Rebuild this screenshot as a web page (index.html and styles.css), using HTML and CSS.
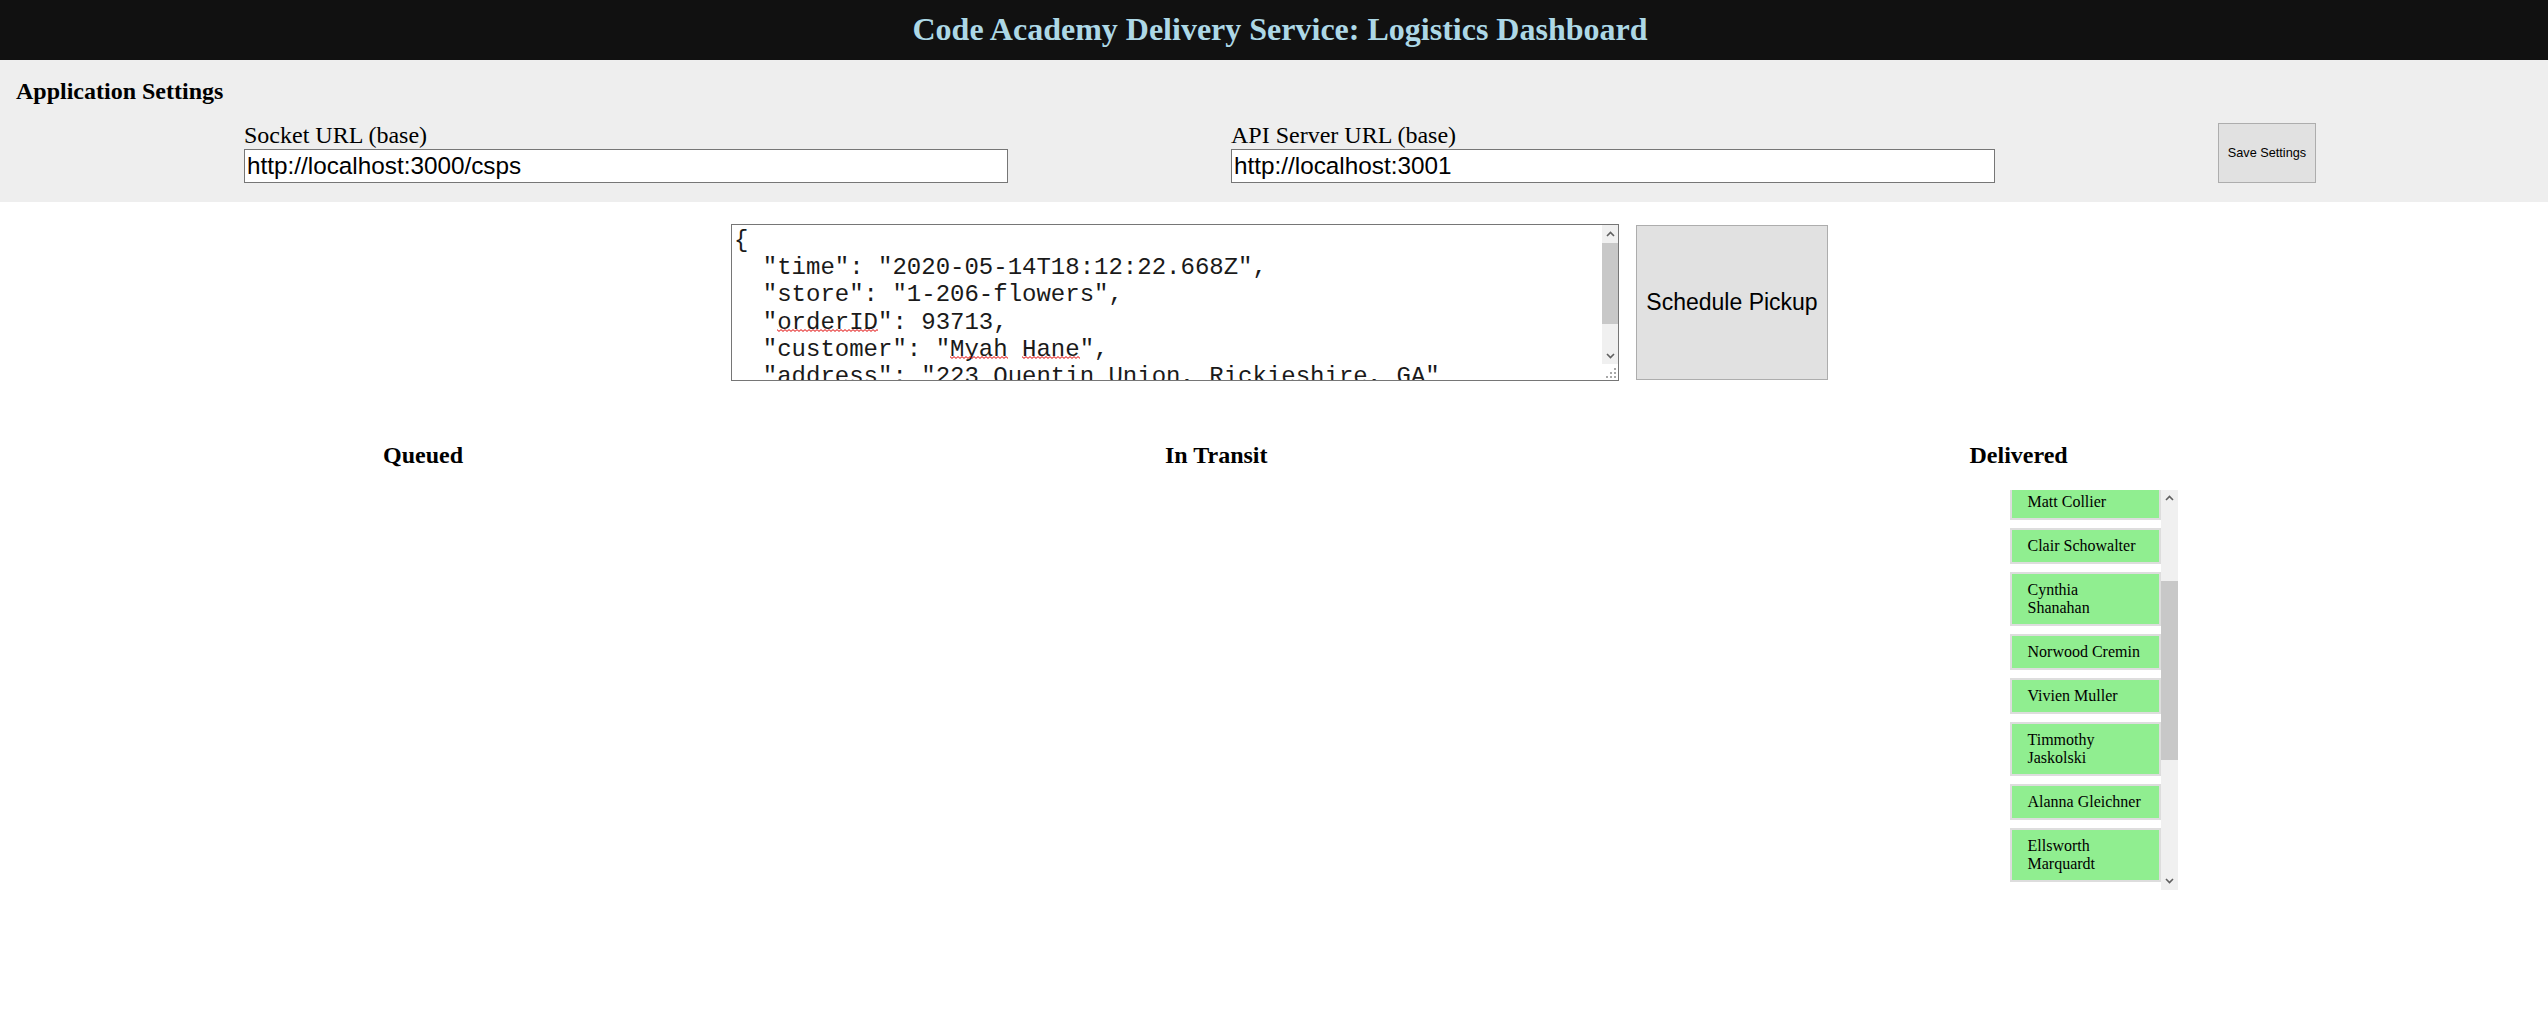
FILE: index.html
```html
<!DOCTYPE html>
<html lang="en">
<head>
<meta charset="utf-8">
<title>Code Academy Delivery Service: Logistics Dashboard</title>
<link rel="stylesheet" href="styles.css">
</head>
<body>
<svg class="defs" width="0" height="0" aria-hidden="true">
  <defs>
    <pattern id="wave" width="4" height="3" patternUnits="userSpaceOnUse">
      <path d="M0 0.6 L2 2.4 L4 0.6" fill="none" stroke="#e00000" stroke-width="1"/>
    </pattern>
  </defs>
</svg>
<header class="app-header">
  <h1 class="app-title">Code Academy Delivery Service: Logistics Dashboard</h1>
</header>
<section class="settings">
  <h2 class="settings-title">Application Settings</h2>
  <form class="settings-row">
    <label class="field">
      <span class="field-label">Socket URL (base)</span>
      <input class="field-input" type="text" value="http://localhost:3000/csps">
    </label>
    <label class="field">
      <span class="field-label">API Server URL (base)</span>
      <input class="field-input" type="text" value="http://localhost:3001">
    </label>
    <button class="btn btn-save" type="button">Save Settings</button>
  </form>
</section>
<section class="pickup">
  <div class="json-box">
    <textarea class="pickup-json" spellcheck="true">{
  "time": "2020-05-14T18:12:22.668Z",
  "store": "1-206-flowers",
  "orderID": 93713,
  "customer": "Myah Hane",
  "address": "223 Quentin Union, Rickieshire, GA"
}</textarea>
    <span class="squiggle squiggle--order"><svg width="101" height="3"><rect width="101" height="3" fill="url(#wave)"/></svg></span>
    <span class="squiggle squiggle--myah"><svg width="58" height="3"><rect width="58" height="3" fill="url(#wave)"/></svg></span>
    <span class="squiggle squiggle--hane"><svg width="58" height="3"><rect width="58" height="3" fill="url(#wave)"/></svg></span>
    <div class="vbar vbar--json">
      <div class="vbar-btn"><svg width="9" height="6" viewBox="0 0 9 6"><path d="M1 5 L4.5 1.5 L8 5" fill="none" stroke="#606060" stroke-width="1.6"/></svg></div>
      <div class="vbar-track"><div class="vbar-thumb vbar-thumb--json"></div></div>
      <div class="vbar-btn"><svg width="9" height="6" viewBox="0 0 9 6"><path d="M1 1 L4.5 4.5 L8 1" fill="none" stroke="#606060" stroke-width="1.6"/></svg></div>
      <div class="vbar-corner"><svg width="16" height="16" viewBox="0 0 16 16"><g fill="#a8a8a8"><rect x="12" y="12" width="2" height="2"/><rect x="8" y="12" width="2" height="2"/><rect x="4" y="12" width="2" height="2"/><rect x="12" y="8" width="2" height="2"/><rect x="8" y="8" width="2" height="2"/><rect x="12" y="4" width="2" height="2"/></g></svg></div>
    </div>
  </div>
  <button class="btn btn-schedule" type="button">Schedule Pickup</button>
</section>
<section class="columns">
  <div class="column">
    <h2 class="column-title">Queued</h2>
    <ul class="order-list"></ul>
  </div>
  <div class="column">
    <h2 class="column-title">In Transit</h2>
    <ul class="order-list"></ul>
  </div>
  <div class="column">
    <h2 class="column-title">Delivered</h2>
    <div class="delivered-box">
      <ul class="order-list order-list--delivered">
        <li class="order">Lorenzo Kunze</li>
        <li class="order">Dayna Hills</li>
        <li class="order">Maximillian Wintheiser</li>
        <li class="order">Matt Collier</li>
        <li class="order">Clair Schowalter</li>
        <li class="order">Cynthia Shanahan</li>
        <li class="order">Norwood Cremin</li>
        <li class="order">Vivien Muller</li>
        <li class="order">Timmothy Jaskolski</li>
        <li class="order">Alanna Gleichner</li>
        <li class="order">Ellsworth Marquardt</li>
        <li class="order">Elroy Kihn</li>
        <li class="order">Jeramy Runolfsdottir</li>
        <li class="order">Brenda Weimann</li>
        <li class="order">Concepcion Schowalter</li>
        <li class="order">Aylin Kuhic</li>
      </ul>
      <div class="vbar vbar--list">
        <div class="vbar-btn"><svg width="9" height="6" viewBox="0 0 9 6"><path d="M1 5 L4.5 1.5 L8 5" fill="none" stroke="#606060" stroke-width="1.6"/></svg></div>
        <div class="vbar-track"><div class="vbar-thumb vbar-thumb--list"></div></div>
        <div class="vbar-btn"><svg width="9" height="6" viewBox="0 0 9 6"><path d="M1 1 L4.5 4.5 L8 1" fill="none" stroke="#606060" stroke-width="1.6"/></svg></div>
      </div>
    </div>
  </div>
</section>
<script src="script.js"></script>
</body>
</html>
```
FILE: styles.css
```css
html, body {
  margin: 0;
  padding: 0;
  background: #fff;
  font-family: "Liberation Serif", "Times New Roman", serif;
  color: #000;
}

.defs {
  position: absolute;
  width: 0;
  height: 0;
}

.app-header {
  box-sizing: border-box;
  height: 60px;
  padding: 11px 0 0 12px;
  background: #111;
}

.app-title {
  margin: 0;
  font-size: 32px;
  line-height: 37px;
  font-weight: bold;
  text-align: center;
  color: #add8e6;
}

.settings {
  background: #eee;
  padding: 18px 16px 19px 16px;
}

.settings-title {
  margin: 0 0 17px 0;
  font-size: 24px;
  font-weight: bold;
}

.settings-row {
  display: flex;
  align-items: center;
  gap: 223px;
  padding-left: 228px;
  margin: 0;
}

.field {
  display: flex;
  flex-direction: column;
  width: 764px;
}

.field-label {
  font-size: 24px;
}

.field-input {
  box-sizing: border-box;
  width: 764px;
  height: 34px;
  margin: 0;
  padding: 1px 2px;
  border: 1px solid #767676;
  background: #fff;
  font-family: "Liberation Sans", Arial, sans-serif;
  font-size: 24.3px;
  color: #000;
}

.btn {
  box-sizing: border-box;
  margin: 0;
  padding: 0;
  background: #e1e1e1;
  border: 1px solid #adadad;
  font-family: "Liberation Sans", Arial, sans-serif;
  color: #000;
}

.btn-save {
  width: 98px;
  height: 60px;
  font-size: 12.7px;
}

.pickup {
  display: flex;
  justify-content: center;
  align-items: center;
  gap: 17px;
  padding-left: 11px;
  margin-top: 22px;
}

.json-box {
  position: relative;
  box-sizing: border-box;
  display: flex;
  width: 888px;
  height: 157px;
  border: 1px solid #767676;
  background: #fff;
}

.pickup-json {
  box-sizing: border-box;
  flex: 1;
  min-width: 0;
  height: 100%;
  margin: 0;
  padding: 2px;
  border: 0;
  outline: none;
  font-family: "Liberation Mono", "Courier New", monospace;
  font-size: 24px;
  line-height: 27.2px;
  color: #1a1a1a;
  background: #fff;
  resize: none;
  overflow: hidden;
  white-space: pre;
}

.squiggle {
  position: absolute;
  height: 3px;
  line-height: 0;
  pointer-events: none;
}

.squiggle svg {
  display: block;
}

.squiggle--order {
  left: 45px;
  top: 104px;
}

.squiggle--myah {
  left: 218px;
  top: 131px;
}

.squiggle--hane {
  left: 290px;
  top: 131px;
}

.vbar {
  display: flex;
  flex-direction: column;
  flex: none;
  width: 17px;
  background: #f0f0f0;
}

.vbar--json {
  width: 16px;
}

.vbar-btn {
  flex: none;
  height: 17px;
  display: flex;
  align-items: center;
  justify-content: center;
}

.vbar-btn svg {
  display: block;
}

.vbar-track {
  flex: 1;
}

.vbar-thumb {
  background: #c8c8c8;
}

.vbar-thumb--json {
  margin-top: 1px;
  height: 81px;
}

.vbar-thumb--list {
  margin-top: 74px;
  height: 179px;
}

.vbar-corner {
  flex: none;
  height: 16px;
  background: #fff;
}

.vbar-corner svg {
  display: block;
}

.btn-schedule {
  width: 192px;
  height: 155px;
  font-size: 23px;
}

.columns {
  display: flex;
  align-items: flex-start;
  gap: 702px;
  padding-left: 383px;
  margin-top: 61px;
}

.column-title {
  margin: 0 0 20.5px 0;
  font-size: 24px;
  font-weight: bold;
}

.order-list {
  margin: 0;
  padding: 0 0 0 40px;
  list-style: none;
}

.delivered-box {
  display: flex;
  height: 400px;
  padding-left: 40px;
}

.order-list--delivered {
  width: 151px;
  height: 400px;
  padding: 0;
  overflow: hidden;
}

.order {
  margin: 8px 0;
  padding: 7px 16px;
  border: 2px solid #ddd;
  background: #90ee90;
  font-size: 16px;
  line-height: 18px;
}
```
FILE: script.js
```js
var delivered = document.querySelector('.order-list--delivered');
if (delivered) {
  delivered.scrollTop = 164;
}
```
